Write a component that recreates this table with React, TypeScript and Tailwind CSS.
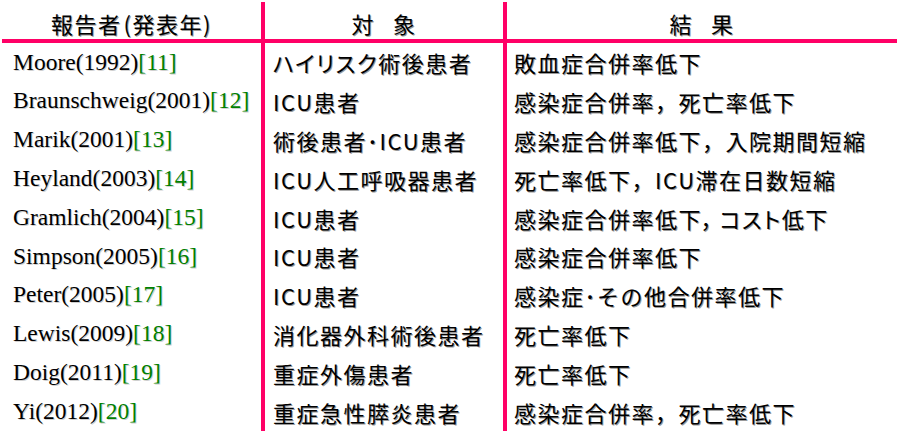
import React from "react";

const P = ({ children, className = "" }: { children: React.ReactNode; className?: string }) => (
  <span className={`[font-feature-settings:'palt'] tracking-[1.5px] ${className}`}>{children}</span>
);

const rows: [string, string, React.ReactNode, React.ReactNode][] = [
  ["Moore(1992)", "[11]", <><P>ハイリスク</P>術後患者</>, "敗血症合併率低下"],
  ["Braunschweig(2001)", "[12]", "ICU患者", "感染症合併率，死亡率低下"],
  ["Marik(2001)", "[13]", "術後患者･ICU患者", "感染症合併率低下，入院期間短縮"],
  ["Heyland(2003)", "[14]", "ICU人工呼吸器患者", "死亡率低下，ICU滞在日数短縮"],
  ["Gramlich(2004)", "[15]", "ICU患者", <>感染症合併率低下<P className="mr-[5px]">，</P><P>コスト</P>低下</>],
  ["Simpson(2005)", "[16]", "ICU患者", "感染症合併率低下"],
  ["Peter(2005)", "[17]", "ICU患者", <>感染症･その他合併率低下</>],
  ["Lewis(2009)", "[18]", "消化器外科術後患者", "死亡率低下"],
  ["Doig(2011)", "[19]", "重症外傷患者", "死亡率低下"],
  ["Yi(2012)", "[20]", "重症急性膵炎患者", "感染症合併率，死亡率低下"],
];

const jp =
  "font-['Noto_Sans_CJK_JP',sans-serif] text-[22px] tracking-[1.5px] text-black [text-shadow:1px_1px_0_#9a9a9a] leading-none";

export default function App() {
  return (
    <div className="w-[899px] h-[431px] bg-white pt-[2px] px-[2px] flex overflow-hidden">
      {/* Column 1 */}
      <div className="w-[259px] flex flex-col">
        <div className={`h-[37px] flex items-center justify-center pt-[4px] ${jp}`}>
          報告者<span className="ml-[2px]">(</span>発表年<span>)</span>
        </div>
        <div className="h-[4px] bg-[#ff0066]" />
        {rows.map((r, i) => (
          <div
            key={i}
            className="h-[38.8px] flex items-center pl-[11px] font-['Liberation_Serif',serif] text-[23.5px] leading-none text-black [text-shadow:1px_1px_0_#d0d0d0]"
          >
            <span>{r[0]}</span>
            <span className="text-[#008000]">{r[1]}</span>
          </div>
        ))}
      </div>
      <div className="w-[4px] bg-[#ff0066]" />
      {/* Column 2 */}
      <div className="w-[238px] flex flex-col">
        <div className={`h-[37px] flex items-center justify-center gap-[18px] pt-[4px] ${jp}`}>
          <span>対</span>
          <span>象</span>
        </div>
        <div className="h-[4px] bg-[#ff0066]" />
        {rows.map((r, i) => (
          <div key={i} className={`h-[38.8px] flex items-center pl-[8px] ${jp}`}>
            <span>{r[2]}</span>
          </div>
        ))}
      </div>
      <div className="w-[4px] bg-[#ff0066]" />
      {/* Column 3 */}
      <div className="w-[390px] flex flex-col">
        <div className={`h-[37px] flex items-center justify-center gap-[18px] pt-[4px] ${jp}`}>
          <span>結</span>
          <span>果</span>
        </div>
        <div className="h-[4px] bg-[#ff0066]" />
        {rows.map((r, i) => (
          <div key={i} className={`h-[38.8px] flex items-center pl-[7px] ${jp}`}>
            <span>{r[3]}</span>
          </div>
        ))}
      </div>
    </div>
  );
}
